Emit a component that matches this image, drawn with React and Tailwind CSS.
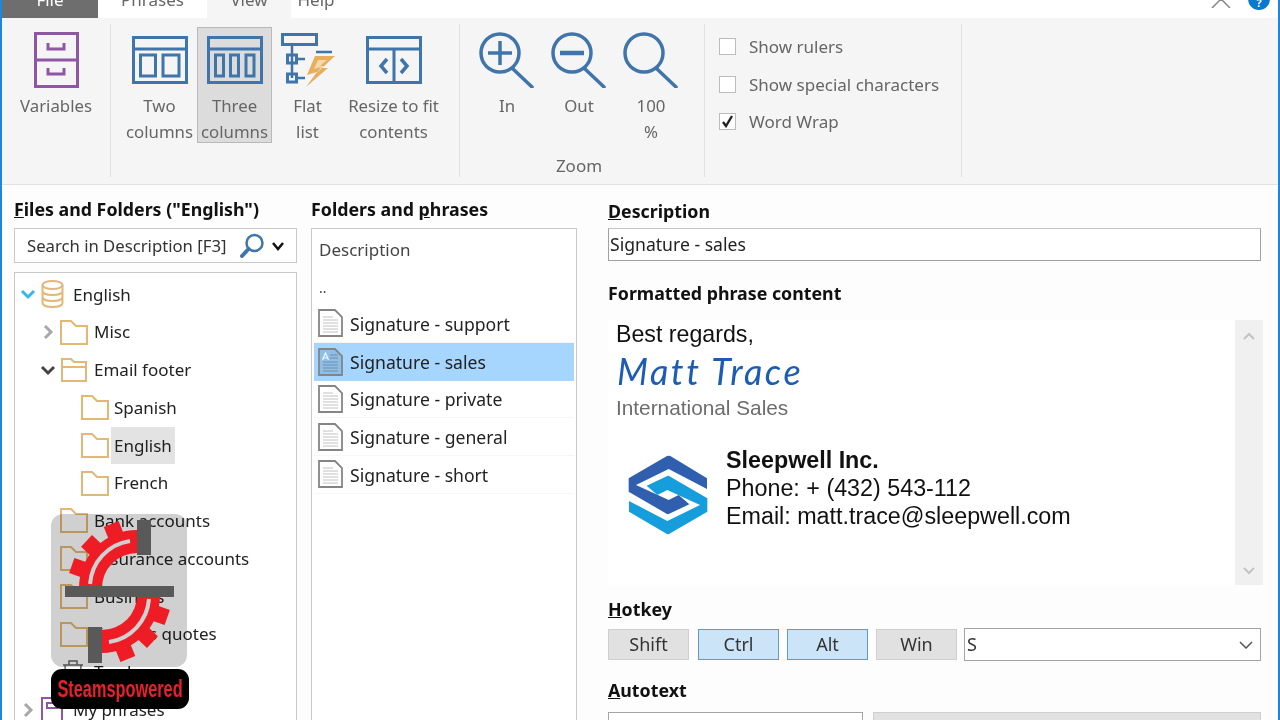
const FONT = "font-['Noto_Sans',sans-serif]";

// ---- ribbon icons ----
const Variables = () => (
  <svg width="45" height="56" viewBox="0 0 45 56" fill="none" stroke="#8f56a3" strokeWidth="3">
    <rect x="1.5" y="1.5" width="42" height="53" />
    <path d="M2 28h41" />
    <path d="M14 11v6h16v-6M14 36v6h16v-6" strokeWidth="3" />
  </svg>
);

const TwoColumns = () => (
  <svg width="56" height="48" viewBox="0 0 56 48" fill="none" stroke="#3f75aa" strokeWidth="3">
    <rect x="1.5" y="1.5" width="53" height="45" />
    <path d="M2 13h52" />
    <rect x="8.5" y="19" width="15" height="21" />
    <rect x="31" y="19" width="16" height="21" />
  </svg>
);

const ThreeColumns = () => (
  <svg width="56" height="48" viewBox="0 0 56 48" fill="none" stroke="#3f75aa" strokeWidth="3">
    <rect x="1.5" y="1.5" width="53" height="45" />
    <path d="M2 13h52" />
    <rect x="8.5" y="19" width="8" height="21" />
    <rect x="23.5" y="19" width="8" height="21" />
    <rect x="39" y="19" width="8" height="21" />
  </svg>
);

const FlatList = () => (
  <svg width="56" height="56" viewBox="0 0 56 56" fill="none">
    <g stroke="#3f75aa" strokeWidth="3">
      <rect x="2.5" y="2.500" width="34" height="10" />
      <path d="M12 14v32M17 27h8M17 46h8M36 20h16" strokeWidth="2.500" />
      <rect x="7.500" y="23" width="9" height="8" />
      <rect x="7.500" y="42" width="9" height="8" />
    </g>
    <path d="M55 24H35L27 43l10-3-11 15 22-19h-6z" fill="#e6ae5d" />
    <path d="M47 28H38l-4 9 7-2-4 6 7-7h-4z" fill="#f5d9a8" />
  </svg>
);

const ResizeFit = () => (
  <svg width="56" height="48" viewBox="0 0 56 48" fill="none" stroke="#3f75aa" strokeWidth="3">
    <rect x="1.5" y="1.5" width="53" height="45" />
    <path d="M2 13h52M28 13v33" />
    <path d="M21 23l-6 7 6 7M35 23l6 7-6 7" strokeWidth="3.5" />
  </svg>
);

const Magnifier = ({ kind }) => (
  <svg width="56" height="56" viewBox="0 0 56 56" fill="none" stroke="#3f75aa" strokeWidth="3.5">
    <circle cx="21" cy="21" r="19" />
    <path d="M33 36l20 19" strokeLinecap="round" />
    {kind !== "none" && <path d="M9 21h24" strokeWidth={kind === "minus" ? 4.5 : 3.5} />}
    {kind === "plus" && <path d="M21 9v24" />}
  </svg>
);

const RibbonButton = ({ icon, lines, width, active }) => (
  <div
    className={`flex flex-col items-center h-[116px] pt-[4px] ${width} ${
      active ? "bg-[#dcdcdc] border border-[#b9b9b9]" : "border border-transparent"
    }`}
  >
    <div className="h-[56px] shrink-0 flex items-center">{icon}</div>
    <div className="mt-[5px] text-[16.8px] leading-[26px] text-[#666] text-center whitespace-nowrap">
      {lines.map((l) => (
        <div key={l}>{l}</div>
      ))}
    </div>
  </div>
);

const Check = ({ label, checked }) => (
  <div className="flex items-center h-[37.5px]">
    <div className="w-[17px] h-[17px] border border-[#bcbcbc] bg-white flex items-center justify-center">
      {checked && (
        <svg width="13" height="13" viewBox="0 0 13 13">
          <path d="M2 7l3 4 6-10" fill="none" stroke="#222" strokeWidth="2.4" />
        </svg>
      )}
    </div>
    <span className="ml-[13px] text-[17px] text-[#666] whitespace-nowrap">{label}</span>
  </div>
);

// ---- tree icons ----
const Folder = () => (
  <svg width="28" height="25" viewBox="0 0 28 25" fill="none" stroke="#e3b876" strokeWidth="2">
    <path d="M1 24V1h10l5 5h11v18z" />
  </svg>
);

const OpenFolder = () => (
  <svg width="28" height="25" viewBox="0 0 28 25" fill="none" stroke="#e3b876" strokeWidth="2">
    <path d="M2 24V2h9l3 3h12v19zM2 10h24" />
  </svg>
);

const Database = () => (
  <svg width="23" height="28" viewBox="0 0 23 28" fill="none" stroke="#e3b876" strokeWidth="2">
    <ellipse cx="11.5" cy="5" rx="10" ry="4" />
    <path d="M1.5 5v18c0 2.500 4.500 4 10 4s10-1.500 10-4V5M1.500 11c0 2.500 4.500 4 10 4s10-1.500 10-4M1.500 17c0 2.500 4.500 4 10 4s10-1.500 10-4" />
  </svg>
);

const Chevron = ({ down, color }) => (
  <svg width="16" height="16" viewBox="0 0 16 16" fill="none" stroke={color} strokeWidth="3">
    <path d={down ? "M2 5l6 6 6-6" : "M5 2l6 6-6 6"} />
  </svg>
);

const Trash = () => (
  <svg width="22" height="26" viewBox="0 0 22 26" fill="none" stroke="#666" strokeWidth="1.500">
    <path d="M1 6h20M7 6V2h8v4M3 6l1 19h14l1-19M8 10v12M11 10v12M14 10v12" />
  </svg>
);

const PhrasesIcon = () => (
  <svg width="22" height="26" viewBox="0 0 22 26" fill="none" stroke="#8f56a3" strokeWidth="2">
    <path d="M1 1h20v24H1zM6 6h10v5H6z" />
  </svg>
);

const Doc = ({ selected }) => (
  <svg width="25" height="28" viewBox="0 0 25 28" fill="none">
    <path d="M1 1h16l7 7v19H1z" fill={selected ? "#8fbfe6" : "#fff"} stroke="#858585" strokeWidth="1.800" />
    {selected ? (
      <>
        <path d="M4.500 12L7.500 5l3 7M6 10h3" stroke="#f1f7fc" strokeWidth="1.200" />
        <path d="M12 7h8M12 10h8M5 14h15M5 17h15M5 20h15M5 23h15" stroke="#6f8fa8" />
      </>
    ) : (
      <path d="M5 8h10M5 11h15M5 14h15M5 17h15M5 20h15M5 23h15" stroke="#c2c2c2" />
    )}
  </svg>
);

const SearchGlass = () => (
  <svg width="26" height="26" viewBox="0 0 26 26" fill="none">
    <circle cx="15.500" cy="10" r="8" stroke="#3f75aa" strokeWidth="2.500" />
    <path d="M9.500 16L3 23" stroke="#3f75aa" strokeWidth="4" strokeLinecap="round" />
  </svg>
);

const Logo = () => (
  <svg width="80" height="80" viewBox="40 30 236 240">
    <path
      d="M40 100L155 33Q160 31 165 33L275 100V132L160 72L62 120L160 165L190 150L222 178L160 207Q158 208 155 207L40 140Z"
      fill="#2f5fae"
    />
    <path
      d="M276 200L161 267Q158 268 155 267L41 200V168L156 228L254 180L156 135L126 150L94 122L156 93Q158 92 161 93L276 160Z"
      fill="#159ddc"
    />
  </svg>
);

// top half of the watermark gear, the lower half is the same turned round
const GearHalf = () => (
  <g>
    <path d="M79 588A58 58 0 0 1 137 530V553A35 35 0 0 0 102 588Z" fill="#ee1c25" />
    <g fill="#ee1c25">
      <rect x="-8" y="-69" width="16" height="17" transform="translate(137 588) rotate(-22)" />
      <rect x="-8" y="-69" width="16" height="17" transform="translate(137 588) rotate(-47)" />
      <rect x="-8" y="-69" width="16" height="17" transform="translate(137 588) rotate(-71)" />
    </g>
    <path d="M130 541A47 47 0 0 0 90 584" fill="none" stroke="#d0d0d0" strokeWidth="4" />
  </g>
);

const Watermark = () => (
  <div className="absolute left-[49px] top-[514px] w-[138px]">
    <div className="absolute left-0 top-0 w-[136px] h-[153px] rounded-[12px] bg-[#d0d0d0] mix-blend-multiply" />
    <svg className="absolute left-0 top-0" width="136" height="153" viewBox="51 514 136 153">
      <GearHalf />
      <g transform="rotate(180 119.500 591.500)">
        <GearHalf />
      </g>
      <rect x="137" y="520" width="14" height="35" fill="#595959" />
      <rect x="65" y="586" width="109" height="11" fill="#595959" />
      <rect x="88" y="627" width="14" height="36" fill="#595959" />
    </svg>
    <div className="absolute left-0 top-[155px] w-[138px] h-[40px] rounded-[11px] bg-black flex items-center justify-center">
      <span className="font-['Liberation_Sans',sans-serif] font-bold text-[24px] text-[#e8212a] leading-none scale-x-[0.68] whitespace-nowrap">
        Steamspowered
      </span>
    </div>
  </div>
);

// ---- data ----
const tree = [
  { label: "English", pad: "pl-[5px]", arrow: <Chevron down color="#35b6ee" />, icon: <Database />, gap: "ml-[1px]", textGap: "ml-[9px]" },
  { label: "Misc", pad: "pl-[25px]", arrow: <Chevron color="#a8a8a8" />, icon: <Folder /> },
  { label: "Email footer", pad: "pl-[25px]", arrow: <Chevron down color="#444" />, icon: <OpenFolder /> },
  { label: "Spanish", pad: "pl-[66px]", icon: <Folder />, textGap: "ml-[5px]" },
  { label: "English", pad: "pl-[66px]", icon: <Folder />, textGap: "ml-[2px]", selected: true },
  { label: "French", pad: "pl-[66px]", icon: <Folder />, textGap: "ml-[5px]" },
  { label: "Bank accounts", pad: "pl-[45px]", icon: <Folder /> },
  { label: "Insurance accounts", pad: "pl-[45px]", icon: <Folder /> },
  { label: "Business", pad: "pl-[45px]", icon: <Folder /> },
  { label: "Famous quotes", pad: "pl-[45px]", icon: <Folder /> },
  { label: "Trash", pad: "pl-[47px]", icon: <Trash />, textGap: "ml-[10px]" },
  { label: "My phrases", pad: "pl-[5px]", arrow: <Chevron color="#a8a8a8" />, icon: <PhrasesIcon />, gap: "ml-[1px]", textGap: "ml-[10px]" },
];

const phrases = ["support", "sales", "private", "general", "short"];

const Label = ({ children }) => (
  <div className="font-bold text-[17.8px] leading-[24px] text-[#111] whitespace-nowrap">{children}</div>
);

const HotkeyButton = ({ label, on }) => (
  <div
    className={`w-[81px] h-[31px] flex items-center justify-center text-[18px] text-[#333] border ${
      on ? "bg-[#cce4f7] border-[#5d9bd1]" : "bg-[#e1e1e1] border-[#cfcfcf]"
    }`}
  >
    {label}
  </div>
);

export default function App() {
  return (
    <div className={`relative w-[1280px] h-[720px] overflow-hidden bg-[#fdfdfd] border-x-2 border-[#1a88e0] ${FONT}`}>
      {/* tab strip, cut off by the top of the picture */}
      <div className="flex h-[18px] bg-white text-[17px] text-[#666]">
        <div className="w-[96px] h-[36px] -mt-[18px] bg-[#6e6e6e] text-white flex items-center justify-center">File</div>
        <div className="w-[109px] h-[36px] -mt-[18px] flex items-center justify-center">Phrases</div>
        <div className="w-[84px] h-[36px] -mt-[18px] bg-[#f5f5f5] flex items-center justify-center">View</div>
        <div className="w-[50px] h-[36px] -mt-[18px] flex items-center justify-center">Help</div>
        <div className="ml-auto relative w-[80px] h-[18px]">
          <svg className="absolute left-[12px] top-0" width="22" height="8" viewBox="0 0 22 8" fill="none" stroke="#888" strokeWidth="1.500">
            <path d="M2 8L11 -1L20 8" />
          </svg>
          <div className="absolute left-[50px] -top-[12px] w-[22px] h-[22px] rounded-full bg-[#0a78d0] flex items-end justify-center text-white text-[11px] font-bold leading-[14px]">?</div>
        </div>
      </div>

      {/* ribbon */}
      <div className="flex h-[167px] bg-[#f5f5f5] border-b border-[#e2e2e2] pt-[6px]">
        <div className="w-[109px] h-[153px] border-r border-[#e0e0e0] flex justify-center pt-[3px]">
          <RibbonButton icon={<Variables />} lines={["Variables"]} width="w-[80px]" />
        </div>
        <div className="w-[349px] h-[153px] border-r border-[#e0e0e0] flex pl-[11px] pt-[3px]">
          <RibbonButton icon={<TwoColumns />} lines={["Two", "columns"]} width="w-[75px]" />
          <RibbonButton icon={<ThreeColumns />} lines={["Three", "columns"]} width="w-[75px]" active />
          <RibbonButton icon={<FlatList />} lines={["Flat", "list"]} width="w-[71px]" />
          <RibbonButton icon={<ResizeFit />} lines={["Resize to fit", "contents"]} width="w-[101px]" />
        </div>
        <div className="w-[245px] h-[153px] border-r border-[#e0e0e0] flex flex-col items-center pr-[6px]">
          <div className="flex pt-[3px]">
            <RibbonButton icon={<Magnifier kind="plus" />} lines={["In"]} width="w-[72px]" />
            <RibbonButton icon={<Magnifier kind="minus" />} lines={["Out"]} width="w-[72px]" />
            <RibbonButton icon={<Magnifier kind="none" />} lines={["100", "%"]} width="w-[72px]" />
          </div>
          <div className="mt-[10px] text-[17px] leading-[26px] text-[#666]">Zoom</div>
        </div>
        <div className="w-[257px] h-[153px] border-r border-[#e0e0e0] pl-[14px] pt-[4px]">
          <Check label="Show rulers" />
          <Check label="Show special characters" />
          <Check label="Word Wrap" checked />
        </div>
      </div>

      {/* three panes */}
      <div className="flex pl-[12px] pt-[12px]">
        <div className="w-[283px] shrink-0">
          <Label>
            <span className="underline">F</span>iles and Folders ("English")
          </Label>
          <div className="mt-[7px] h-[35px] bg-white border border-[#c9c9c9] flex items-center pl-[12px] text-[16.7px] text-[#333]">
            <span className="whitespace-nowrap">Search in Description [F3]</span>
            <div className="ml-auto mr-[11px] flex items-center gap-[6px]">
              <SearchGlass />
              <svg width="14" height="10" viewBox="0 0 14 10" fill="none" stroke="#111" strokeWidth="2.500">
                <path d="M2 2l5 6 5-6" />
              </svg>
            </div>
          </div>
          <div className="mt-[9px] h-[460px] bg-white border border-[#c9c9c9] pt-[2.5px] text-[17px] text-[#222]">
            {tree.map((t, i) => (
              <div key={i} className={`flex items-center h-[37.75px] ${t.pad}`}>
                {t.arrow && <span className="mr-[4px] flex">{t.arrow}</span>}
                <span className={`flex ${t.gap || ""}`}>{t.icon}</span>
                <span
                  className={`${t.textGap || "ml-[6px]"} whitespace-nowrap ${
                    t.selected ? "bg-[#e3e3e3] h-[37px] leading-[37px] px-[3px]" : ""
                  }`}
                >
                  {t.label}
                </span>
              </div>
            ))}
          </div>
        </div>

        <div className="w-[266px] shrink-0 ml-[14px]">
          <Label>
            Folders and <span className="underline">p</span>hrases
          </Label>
          <div className="mt-[7px] h-[500px] bg-white border border-[#c9c9c9] px-[2px] text-[17px] text-[#222]">
            <div className="h-[41px] pl-[5px] flex items-center text-[#444]">Description</div>
            <div className="h-[35px] pl-[5px] flex items-center text-[#444] text-[14px]">..</div>
            {phrases.map((p) => (
              <div
                key={p}
                className={`h-[37.75px] flex items-center pl-[4px] text-[17.6px] ${p === "sales" ? "bg-[#a6d5fd]" : "border-b border-[#f6f6f6]"}`}
              >
                <Doc selected={p === "sales"} />
                <span className="ml-[7px] mt-[1px] whitespace-nowrap">Signature - {p}</span>
              </div>
            ))}
          </div>
        </div>

        <div className="w-[655px] shrink-0 ml-[31px]">
          <div className="h-[24px] flex items-center pt-[4px]">
            <Label>
              <span className="underline">D</span>escription
            </Label>
          </div>
          <div className="mt-[7px] w-[653px] h-[33px] bg-white border border-[#a0a0a0] border-t-[#c4c4c4] flex items-center pl-[1px] text-[17.6px] text-[#222]">
            Signature - sales
          </div>
          <div className="mt-[20px]">
            <Label>Formatted phrase content</Label>
          </div>
          <div className="mt-[15px] h-[265px] flex bg-white font-['Liberation_Sans',sans-serif]">
            <div className="flex-1 pl-[8px] pt-[1px]">
              <div className="text-[23.200px] leading-[26px] text-[#111]">Best regards,</div>
              <div className="mt-[5px] ml-[1px] font-['Lato',sans-serif] italic text-[36px] leading-[38px] tracking-[2.500px] text-[#1c5cb4]">
                Matt Trace
              </div>
              <div className="mt-[6px] text-[20.800px] leading-[24px] text-[#6d6d6d]">International Sales</div>
              <div className="mt-[26px] flex pl-[12px]">
                <div className="pt-[9px]">
                  <Logo />
                </div>
                <div className="ml-[18px] text-[23.300px] leading-[28px] text-[#111] whitespace-nowrap">
                  <div className="font-bold">Sleepwell Inc.</div>
                  <div>Phone: + (432) 543-112</div>
                  <div>Email: matt.trace@sleepwell.com</div>
                </div>
              </div>
            </div>
            <div className="w-[28px] bg-[#f0f0f0] flex flex-col items-center justify-between pt-[12px] pb-[10px]">
              <svg width="12" height="8" viewBox="0 0 12 8" fill="none" stroke="#c4c4c4" strokeWidth="2">
                <path d="M1 7l5-5 5 5" />
              </svg>
              <svg width="12" height="8" viewBox="0 0 12 8" fill="none" stroke="#c4c4c4" strokeWidth="2">
                <path d="M1 1l5 5 5-5" />
              </svg>
            </div>
          </div>
          <div className="mt-[12px]">
            <Label>
              <span className="underline">H</span>otkey
            </Label>
          </div>
          <div className="mt-[7px] flex items-center">
            <HotkeyButton label="Shift" />
            <div className="ml-[9px]"><HotkeyButton label="Ctrl" on /></div>
            <div className="ml-[8px]"><HotkeyButton label="Alt" on /></div>
            <div className="ml-[8px]"><HotkeyButton label="Win" /></div>
            <div className="ml-[7px] w-[297px] h-[33px] bg-white border border-[#a5a5a5] flex items-center justify-between pl-[2px] pr-[7px] text-[18px] text-[#333]">
              S
              <svg width="14" height="8" viewBox="0 0 14 8" fill="none" stroke="#555" strokeWidth="1.500">
                <path d="M1 1l6 6 6-6" />
              </svg>
            </div>
          </div>
          <div className="mt-[17px]">
            <Label>
              <span className="underline">A</span>utotext
            </Label>
          </div>
          <div className="mt-[10px] flex">
            <div className="w-[255px] h-[30px] bg-white border border-[#a5a5a5]" />
            <div className="ml-[10px] w-[388px] h-[30px] bg-[#e1e1e1] border border-[#cfcfcf]" />
          </div>
        </div>
      </div>

      <Watermark />
    </div>
  );
}
